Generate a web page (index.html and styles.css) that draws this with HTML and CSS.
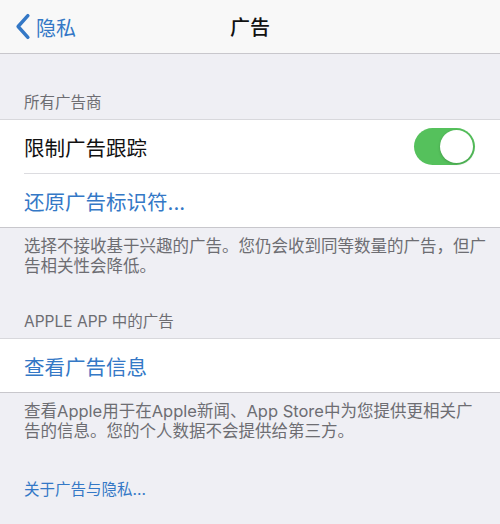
FILE: index.html
```html
<!DOCTYPE html>
<html lang="zh-CN">
<head>
    <meta charset="UTF-8">
    <meta name="viewport" content="width=device-width, initial-scale=1.0">
    <title>广告</title>
    <link rel="stylesheet" href="styles.css">
</head>
<body>
    <div class="nav-bar">
        <a href="#" class="back-button">
            <svg class="back-icon" viewBox="0 0 14 24">
                <path d="M11.5 2 L2.5 12 L11.5 22"/>
            </svg>
            隐私
        </a>
        <h1>广告</h1>
    </div>

    <div class="section-header first">所有广告商</div>
    <div class="group">
        <div class="row">
            <span class="row-label">限制广告跟踪</span>
            <div class="switch on"><div class="knob"></div></div>
        </div>
        <div class="row link">还原广告标识符...</div>
    </div>
    <div class="section-footer">选择不接收基于兴趣的广告。您仍会收到同等数量的广告，但广告相关性会降低。</div>

    <div class="section-header">APPLE APP 中的广告</div>
    <div class="group">
        <div class="row link">查看广告信息</div>
    </div>
    <div class="section-footer">查看Apple用于在Apple新闻、App Store中为您提供更相关广告的信息。您的个人数据不会提供给第三方。</div>

    <a href="#" class="about-link">关于广告与隐私...</a>
</body>
</html>
```

FILE: styles.css
```css
body {
    font-family: 'Inter', 'Noto Sans CJK SC', sans-serif;
    margin: 0;
    padding: 0;
    background-color: #efeff4;
    color: #111;
    width: 500px;
    min-height: 524px;
}

.nav-bar {
    height: 53px;
    background-color: #f8f8f8;
    border-bottom: 1px solid #c8c7cc;
    display: flex;
    align-items: center;
    justify-content: center;
    position: relative;
}

.nav-bar h1 {
    margin: 0;
    font-size: 20px;
    font-weight: 500;
}

.back-button {
    position: absolute;
    left: 15px;
    top: 50%;
    transform: translateY(-50%);
    display: flex;
    align-items: center;
    gap: 5px;
    color: #3478c6;
    font-size: 20px;
    text-decoration: none;
}

.back-icon {
    width: 16px;
    height: 26px;
    fill: none;
    stroke: currentColor;
    stroke-width: 3.2;
    stroke-linecap: round;
    stroke-linejoin: round;
}

.section-header {
    padding: 0 24px 6px;
    font-size: 15.5px;
    line-height: 20px;
    color: #6d6d72;
    padding-top: 36px;
}

.section-header.first {
    padding-top: 39px;
}

.group {
    background-color: white;
    border-top: 1px solid #d8d8dc;
    border-bottom: 1px solid #c8c7cc;
}

.row {
    height: 53px;
    margin-left: 24px;
    padding-right: 25px;
    display: flex;
    align-items: center;
    justify-content: space-between;
    font-size: 20.5px;
}

.row + .row {
    border-top: 1px solid #dcdce0;
}

.row.link {
    color: #3478c6;
}

.switch {
    width: 61px;
    height: 37px;
    border-radius: 19px;
    background-color: #e5e5ea;
    position: relative;
}

.switch.on {
    background-color: #55c15c;
}

.knob {
    position: absolute;
    top: 2px;
    right: 2px;
    width: 33px;
    height: 33px;
    border-radius: 50%;
    background-color: white;
    box-shadow: 0 1px 3px rgba(0,0,0,0.2);
}

.section-footer {
    padding: 9px 14px 0 24px;
    font-size: 16.5px;
    line-height: 19.5px;
    color: #6d6d72;
}

.about-link {
    display: block;
    margin-top: 39px;
    padding: 0 24px;
    font-size: 15.5px;
    line-height: 20px;
    color: #3478c6;
    text-decoration: none;
}
```
